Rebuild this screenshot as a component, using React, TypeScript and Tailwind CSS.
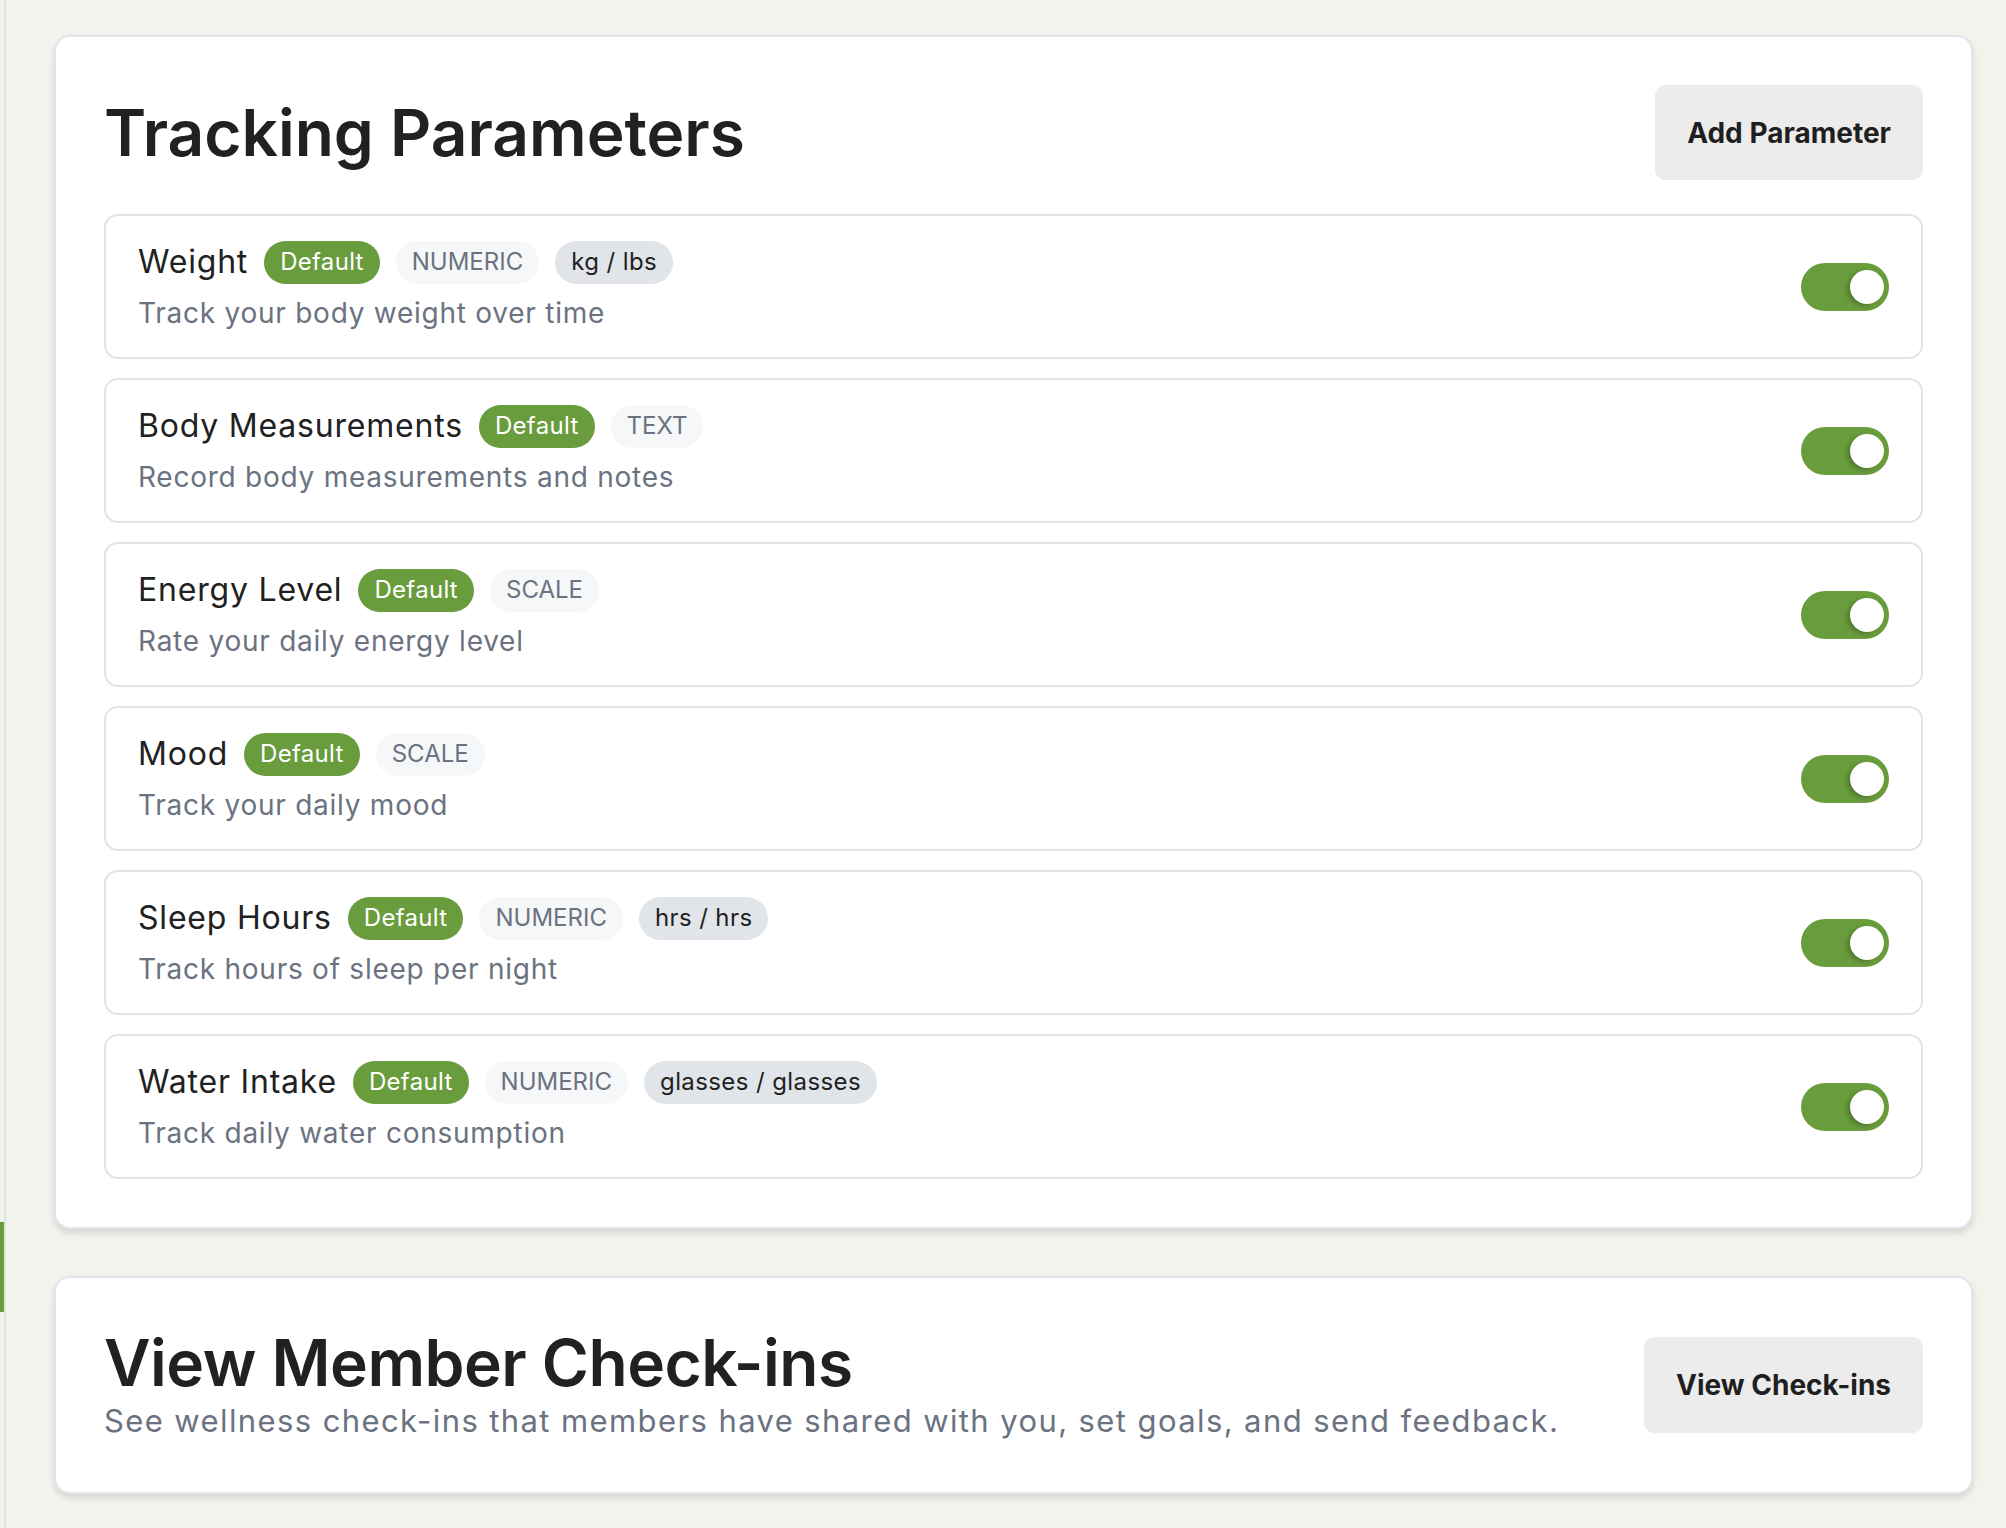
import React from "react";

type Param = {
  name: string;
  type: string;
  unit?: string;
  desc: string;
};

const params: Param[] = [
  { name: "Weight", type: "NUMERIC", unit: "kg / lbs", desc: "Track your body weight over time" },
  { name: "Body Measurements", type: "TEXT", desc: "Record body measurements and notes" },
  { name: "Energy Level", type: "SCALE", desc: "Rate your daily energy level" },
  { name: "Mood", type: "SCALE", desc: "Track your daily mood" },
  { name: "Sleep Hours", type: "NUMERIC", unit: "hrs / hrs", desc: "Track hours of sleep per night" },
  { name: "Water Intake", type: "NUMERIC", unit: "glasses / glasses", desc: "Track daily water consumption" },
];

const sans = "font-['Inter','Liberation_Sans',sans-serif]";

function Toggle() {
  return (
    <div className="relative w-[88px] h-[48px] rounded-full bg-[#699c3c] shrink-0">
      <div className="absolute right-[5px] top-[7px] w-[34px] h-[34px] rounded-full bg-white shadow-[-3px_2px_4px_rgba(0,0,0,0.22)]" />
    </div>
  );
}

function Row({ p }: { p: Param }) {
  return (
    <div className="flex items-center justify-between border-2 border-[#e1e4e8] rounded-[14px] bg-white pl-8 pr-8 pt-6 pb-[23px]">
      <div className="flex flex-col">
        <div className="flex items-center gap-4 h-[44px]">
          <span className="text-[32px] leading-[44px] text-[#212121] tracking-[0.8px]">{p.name}</span>
          <span className="h-[43px] px-4 flex items-center rounded-full bg-[#699c3c] text-white text-[24px] tracking-[0.3px]">Default</span>
          <span className="h-[43px] px-4 flex items-center rounded-full bg-[#f6f7f9] text-[#6b7280] text-[24px] uppercase">{p.type}</span>
          {p.unit && (
            <span className="h-[43px] px-4 flex items-center rounded-full bg-[#e1e4e8] text-[#1f1f1f] text-[24px] tracking-[0.4px]">{p.unit}</span>
          )}
        </div>
        <div className="mt-2 text-[28px] leading-[42px] text-[#6b7280] tracking-[0.75px]">{p.desc}</div>
      </div>
      <Toggle />
    </div>
  );
}

export default function App() {
  return (
    <div className={`min-h-[1528px] w-full bg-[#f1f4ec] flex ${sans}`}>
      <div className="w-[6px] shrink-0 border-r-2 border-[#dfe5d7] flex flex-col">
        <div className="h-[1222px]" />
        <div className="h-[90px] w-[4px] bg-[#699c3c]" />
      </div>
      <main className="flex-1 pl-[48px] pr-[33px] pt-[35px] pb-8 flex flex-col gap-[47px]">
        <section className="bg-white border-2 border-[#e3e5ea] rounded-[16px] shadow-[0_4px_6px_rgba(0,0,0,0.12)] p-12">
          <div className="flex items-center justify-between mb-[34px]">
            <h1 className="text-[64px] leading-[77px] font-semibold text-[#212121]">Tracking Parameters</h1>
            <button className="h-[95px] px-8 rounded-[10px] bg-[#ececec] text-[28px] font-bold text-[#1f1f1f] font-['Inter',sans-serif]">
              Add Parameter
            </button>
          </div>
          <div className="flex flex-col gap-[19px]">
            {params.map((p) => (
              <Row key={p.name} p={p} />
            ))}
          </div>
        </section>
        <section className="bg-white border-2 border-[#e3e5ea] rounded-[16px] shadow-[0_4px_6px_rgba(0,0,0,0.12)] px-12 py-[49px] flex items-center justify-between">
          <div className="flex flex-col">
            <h2 className="text-[64px] leading-[72px] font-semibold text-[#212121] tracking-[-0.5px]">View Member Check-ins</h2>
            <p className="text-[31px] leading-[44px] text-[#6b7280] tracking-[1.4px]">
              See wellness check-ins that members have shared with you, set goals, and send feedback.
            </p>
          </div>
          <button className="h-[96px] px-8 rounded-[10px] bg-[#ececec] text-[28px] font-bold text-[#1f1f1f] font-['Inter',sans-serif]">
            View Check-ins
          </button>
        </section>
      </main>
    </div>
  );
}
